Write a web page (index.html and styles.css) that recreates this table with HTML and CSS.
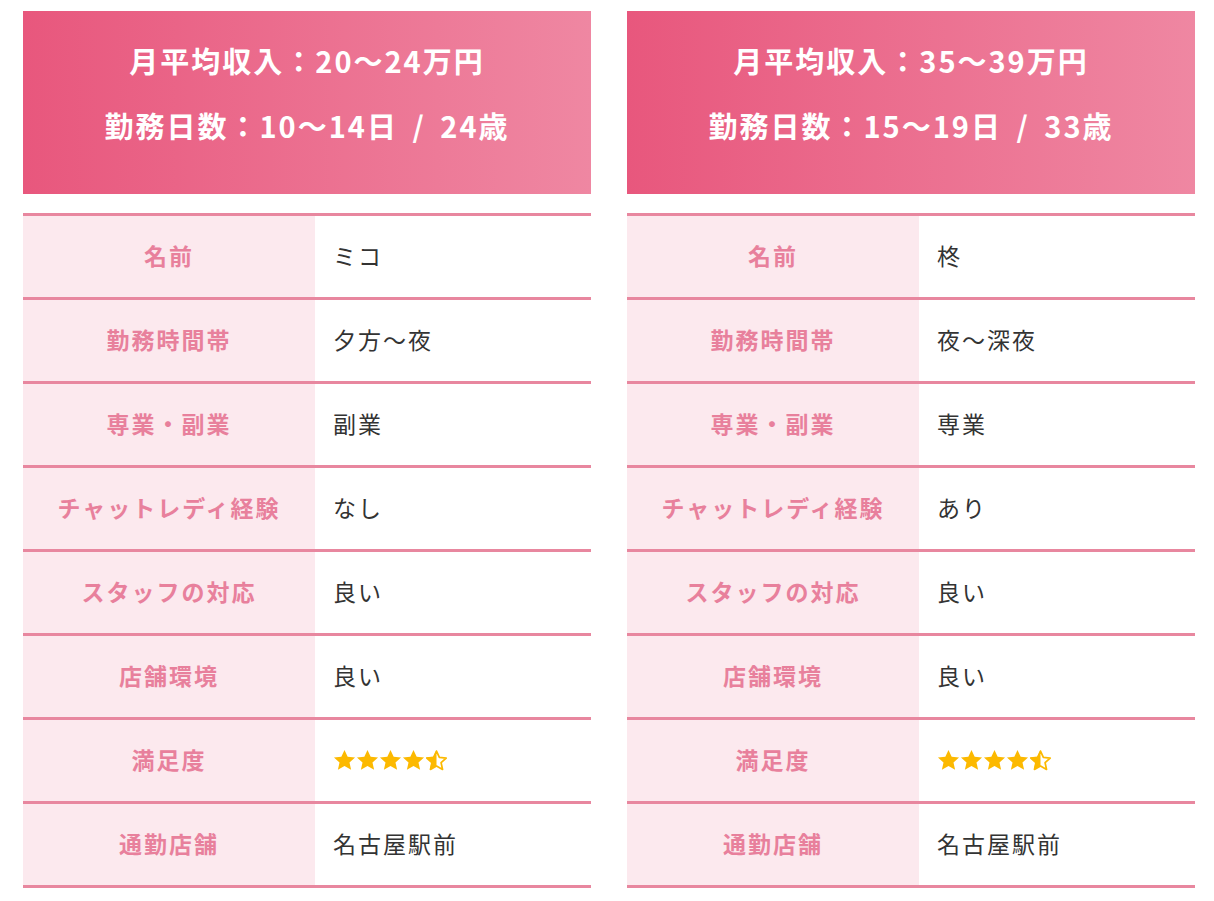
FILE: index.html
```html
<!DOCTYPE html>
<html lang="ja">
<head>
<meta charset="utf-8">
<link rel="stylesheet" href="styles.css">
</head>
<body>
<svg width="0" height="0" class="defs">
  <defs>
    <symbol id="star" viewBox="0 0 24 24"><path d="M12 1l3.3 7.1 7.7.8-5.8 5.2 1.7 7.6L12 17.8l-6.9 3.9 1.7-7.6L1 8.9l7.7-.8z"/></symbol>
    <symbol id="half" viewBox="0 0 24 24"><path d="M12 2.2l3 6.6 7.1.7-5.3 4.8 1.5 7L12 17.8l-6.3 3.5 1.5-7-5.3-4.8 7.1-.7z" fill="none" stroke="currentColor" stroke-width="1.8" stroke-linejoin="round"/><path d="M12 1v16.8l-6.9 3.9 1.7-7.6L1 8.9l7.7-.8z"/></symbol>
  </defs>
</svg>
<div class="wrap">
  <section class="card">
    <div class="head">
      <p class="head-line">月平均収入：20〜24万円</p>
      <p class="head-line">勤務日数：10〜14日 <span class="slash">/</span> 24歳</p>
    </div>
    <div class="table">
      <div class="row"><div class="label">名前</div><div class="value">ミコ</div></div>
      <div class="row"><div class="label">勤務時間帯</div><div class="value">夕方〜夜</div></div>
      <div class="row"><div class="label">専業・副業</div><div class="value">副業</div></div>
      <div class="row"><div class="label">チャットレディ経験</div><div class="value">なし</div></div>
      <div class="row"><div class="label">スタッフの対応</div><div class="value">良い</div></div>
      <div class="row"><div class="label">店舗環境</div><div class="value">良い</div></div>
      <div class="row"><div class="label">満足度</div><div class="value"><span class="stars"><svg><use href="#star"/></svg><svg><use href="#star"/></svg><svg><use href="#star"/></svg><svg><use href="#star"/></svg><svg><use href="#half"/></svg></span></div></div>
      <div class="row"><div class="label">通勤店舗</div><div class="value">名古屋駅前</div></div>
    </div>
  </section>
  <section class="card">
    <div class="head">
      <p class="head-line">月平均収入：35〜39万円</p>
      <p class="head-line">勤務日数：15〜19日 <span class="slash">/</span> 33歳</p>
    </div>
    <div class="table">
      <div class="row"><div class="label">名前</div><div class="value">柊</div></div>
      <div class="row"><div class="label">勤務時間帯</div><div class="value">夜〜深夜</div></div>
      <div class="row"><div class="label">専業・副業</div><div class="value">専業</div></div>
      <div class="row"><div class="label">チャットレディ経験</div><div class="value">あり</div></div>
      <div class="row"><div class="label">スタッフの対応</div><div class="value">良い</div></div>
      <div class="row"><div class="label">店舗環境</div><div class="value">良い</div></div>
      <div class="row"><div class="label">満足度</div><div class="value"><span class="stars"><svg><use href="#star"/></svg><svg><use href="#star"/></svg><svg><use href="#star"/></svg><svg><use href="#star"/></svg><svg><use href="#half"/></svg></span></div></div>
      <div class="row"><div class="label">通勤店舗</div><div class="value">名古屋駅前</div></div>
    </div>
  </section>
</div>
</body>
</html>
```
FILE: styles.css
```css
html, body {
  margin: 0;
  background: #ffffff;
}
body {
  padding: 11px 19px 0 23px;
  font-family: "Noto Sans CJK JP", "Noto Sans", sans-serif;
}
.defs {
  position: absolute;
  width: 0;
  height: 0;
}
.wrap {
  display: grid;
  grid-template-columns: 568px 568px;
  column-gap: 36px;
}
.head {
  height: 183px;
  background: linear-gradient(90deg, #e8577d 0%, #ef87a2 100%);
  display: flex;
  flex-direction: column;
  align-items: center;
  justify-content: center;
  gap: 21px;
  padding-bottom: 20px;
  box-sizing: border-box;
}
.head-line {
  margin: 0;
  color: #ffffff;
  font-size: 29px;
  font-weight: 700;
  line-height: 44px;
  letter-spacing: 2px;
  white-space: pre;
}
.slash {
  margin: 0 6px;
}
.table {
  margin-top: 19px;
  border-top: 3px solid #e8879f;
}
.row {
  display: grid;
  grid-template-columns: 292px 1fr;
  height: 81px;
  border-bottom: 3px solid #e8879f;
}
.label {
  background: #fce9ee;
  color: #e8809c;
  font-weight: 700;
  font-size: 23px;
  letter-spacing: 2px;
  display: flex;
  align-items: center;
  justify-content: center;
  padding-bottom: 3px;
}
.value {
  color: #333333;
  font-size: 23px;
  letter-spacing: 2px;
  display: flex;
  align-items: center;
  padding-left: 18px;
  padding-bottom: 3px;
}
.stars {
  display: flex;
  gap: 0;
  color: #fcb900;
  fill: #fcb900;
  padding-top: 3px;
}
.stars svg {
  width: 23px;
  height: 23px;
}
```
